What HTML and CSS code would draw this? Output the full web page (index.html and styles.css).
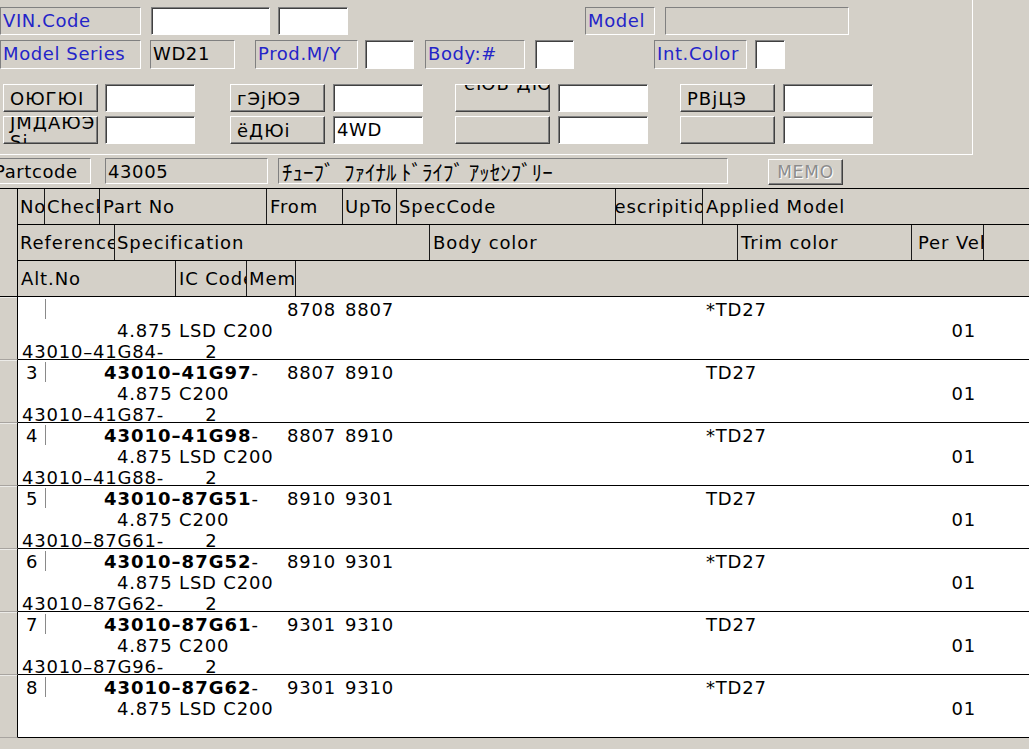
FILE: index.html
```html
<!DOCTYPE html>
<html>
<head>
<meta charset="utf-8">
<link rel="stylesheet" href="styles.css">
</head>
<body>
<div class="screen">
  <div class="panel">
    <div class="frow r1">
      <div class="lbl w141">VIN.Code</div>
      <div class="inp m10 w119"></div>
      <div class="inp m8 w70"></div>
      <div class="lbl m237 w70">Model</div>
      <div class="fld m10 w184"></div>
    </div>
    <div class="frow r2">
      <div class="lbl w141">Model Series</div>
      <div class="fld m9 w85">WD21</div>
      <div class="lbl m20 w103">Prod.M/Y</div>
      <div class="inp m7 w49"></div>
      <div class="lbl m11 w100">Body:#</div>
      <div class="inp m10 w39"></div>
      <div class="lbl m80 w93">Int.Color</div>
      <div class="inp m8 w30"></div>
    </div>
    <div class="frow r3">
      <div class="btn m3"><span>ОЮГЮI</span></div>
      <div class="inp m7 w90"></div>
      <div class="btn m35"><span>гЭjЮЭ</span></div>
      <div class="inp m8 w90"></div>
      <div class="btn btn-top m32"><span>еЮЬ ДЮ</span></div>
      <div class="inp m8 w90"></div>
      <div class="btn m32"><span>РВjЦЭ</span></div>
      <div class="inp m8 w90"></div>
    </div>
    <div class="frow r4">
      <div class="btn btn-two m3"><span>JМДАЮЭ</span><span>Si</span></div>
      <div class="inp m7 w90"></div>
      <div class="btn m35"><span>ёДЮi</span></div>
      <div class="inp m8 w90">4WD</div>
      <div class="btn m32"></div>
      <div class="inp m8 w90"></div>
      <div class="btn m32"></div>
      <div class="inp m8 w90"></div>
    </div>
  </div>

  <div class="partrow">
    <div class="lbl plbl">Partcode</div>
    <div class="fld m14 w163">43005</div>
    <div class="fld jp m10 w450">ﾁｭｰﾌﾞ  ﾌｧｲﾅﾙ ﾄﾞﾗｲﾌﾞ ｱｯｾﾝﾌﾞﾘｰ</div>
    <div class="memo m40">MEMO</div>
  </div>

  <div class="grid">
    <div class="ghead">
      <div class="rh rh-head"></div>
      <div class="hrows">
        <div class="hrow">
          <div class="hc h-no">No</div>
          <div class="hc h-chk">Check</div>
          <div class="hc h-pn">Part No</div>
          <div class="hc h-from">From</div>
          <div class="hc h-upto">UpTo</div>
          <div class="hc h-spec">SpecCode</div>
          <div class="hc h-desc"><span>Descripition</span></div>
          <div class="hc h-app last">Applied Model</div>
        </div>
        <div class="hrow">
          <div class="hc h-ref">Reference</div>
          <div class="hc h-spn">Specification</div>
          <div class="hc h-body">Body color</div>
          <div class="hc h-trim">Trim color</div>
          <div class="hc h-per">Per Vehicle</div>
          <div class="hc last"></div>
        </div>
        <div class="hrow">
          <div class="hc h-alt">Alt.No</div>
          <div class="hc h-ic">IC Code</div>
          <div class="hc h-memo">Memo</div>
          <div class="hc last"></div>
        </div>
      </div>
    </div>

    <div class="drow">
      <div class="rh"></div>
      <div class="dlines">
        <div class="dl"><span class="c-no"></span><span class="c-chk"></span><span class="c-pn"></span><span class="c-from">8708</span><span class="c-upto">8807</span><span class="c-spec"></span><span class="c-desc"></span><span class="c-app">*TD27</span></div>
        <div class="dl"><span class="c-ref"></span><span class="c-spn">4.875 LSD C200</span><span class="c-body"></span><span class="c-trim"></span><span class="c-per">01</span></div>
        <div class="dl"><span class="c-alt">43010–41G84-</span><span class="c-ic">2</span><span class="c-memo"></span></div>
      </div>
    </div>

    <div class="drow">
      <div class="rh"></div>
      <div class="dlines">
        <div class="dl"><span class="c-no">3</span><span class="c-chk"></span><span class="c-pn"><b>43010–41G97</b>-</span><span class="c-from">8807</span><span class="c-upto">8910</span><span class="c-spec"></span><span class="c-desc"></span><span class="c-app">TD27</span></div>
        <div class="dl"><span class="c-ref"></span><span class="c-spn">4.875 C200</span><span class="c-body"></span><span class="c-trim"></span><span class="c-per">01</span></div>
        <div class="dl"><span class="c-alt">43010–41G87-</span><span class="c-ic">2</span><span class="c-memo"></span></div>
      </div>
    </div>

    <div class="drow">
      <div class="rh"></div>
      <div class="dlines">
        <div class="dl"><span class="c-no">4</span><span class="c-chk"></span><span class="c-pn"><b>43010–41G98</b>-</span><span class="c-from">8807</span><span class="c-upto">8910</span><span class="c-spec"></span><span class="c-desc"></span><span class="c-app">*TD27</span></div>
        <div class="dl"><span class="c-ref"></span><span class="c-spn">4.875 LSD C200</span><span class="c-body"></span><span class="c-trim"></span><span class="c-per">01</span></div>
        <div class="dl"><span class="c-alt">43010–41G88-</span><span class="c-ic">2</span><span class="c-memo"></span></div>
      </div>
    </div>

    <div class="drow">
      <div class="rh"></div>
      <div class="dlines">
        <div class="dl"><span class="c-no">5</span><span class="c-chk"></span><span class="c-pn"><b>43010–87G51</b>-</span><span class="c-from">8910</span><span class="c-upto">9301</span><span class="c-spec"></span><span class="c-desc"></span><span class="c-app">TD27</span></div>
        <div class="dl"><span class="c-ref"></span><span class="c-spn">4.875 C200</span><span class="c-body"></span><span class="c-trim"></span><span class="c-per">01</span></div>
        <div class="dl"><span class="c-alt">43010–87G61-</span><span class="c-ic">2</span><span class="c-memo"></span></div>
      </div>
    </div>

    <div class="drow">
      <div class="rh"></div>
      <div class="dlines">
        <div class="dl"><span class="c-no">6</span><span class="c-chk"></span><span class="c-pn"><b>43010–87G52</b>-</span><span class="c-from">8910</span><span class="c-upto">9301</span><span class="c-spec"></span><span class="c-desc"></span><span class="c-app">*TD27</span></div>
        <div class="dl"><span class="c-ref"></span><span class="c-spn">4.875 LSD C200</span><span class="c-body"></span><span class="c-trim"></span><span class="c-per">01</span></div>
        <div class="dl"><span class="c-alt">43010–87G62-</span><span class="c-ic">2</span><span class="c-memo"></span></div>
      </div>
    </div>

    <div class="drow">
      <div class="rh"></div>
      <div class="dlines">
        <div class="dl"><span class="c-no">7</span><span class="c-chk"></span><span class="c-pn"><b>43010–87G61</b>-</span><span class="c-from">9301</span><span class="c-upto">9310</span><span class="c-spec"></span><span class="c-desc"></span><span class="c-app">TD27</span></div>
        <div class="dl"><span class="c-ref"></span><span class="c-spn">4.875 C200</span><span class="c-body"></span><span class="c-trim"></span><span class="c-per">01</span></div>
        <div class="dl"><span class="c-alt">43010–87G96-</span><span class="c-ic">2</span><span class="c-memo"></span></div>
      </div>
    </div>

    <div class="drow">
      <div class="rh"></div>
      <div class="dlines">
        <div class="dl"><span class="c-no">8</span><span class="c-chk"></span><span class="c-pn"><b>43010–87G62</b>-</span><span class="c-from">9301</span><span class="c-upto">9310</span><span class="c-spec"></span><span class="c-desc"></span><span class="c-app">*TD27</span></div>
        <div class="dl"><span class="c-ref"></span><span class="c-spn">4.875 LSD C200</span><span class="c-body"></span><span class="c-trim"></span><span class="c-per">01</span></div>
        <div class="dl"><span class="c-alt"></span><span class="c-ic"></span><span class="c-memo"></span></div>
      </div>
    </div>
  </div>
</div>
</body>
</html>
```

FILE: styles.css
```css
* { box-sizing: border-box; }

html, body {
  margin: 0;
  padding: 0;
  background: #d4d0c8;
}

body {
  width: 1029px;
  height: 749px;
  overflow: hidden;
  font-family: "DejaVu Sans", "Noto Sans CJK JP", sans-serif;
  font-size: 18px;
  color: #000;
}

.screen {
  width: 1029px;
  height: 749px;
  overflow: hidden;
}

/* ---------- top panel ---------- */
.panel {
  width: 973px;
  height: 155px;
  border-right: 1px solid #ffffff;
  border-bottom: 1px solid #ffffff;
  padding-top: 7px;
}

.frow {
  display: flex;
  height: 28px;
}
.r2 { margin-top: 5px; height: 29px; }
.r3 { margin-top: 15px; }
.r4 { margin-top: 4px; }

.lbl, .fld, .inp {
  height: 100%;
  border-top: 1px solid #808080;
  border-left: 1px solid #808080;
  border-bottom: 1px solid #ffffff;
  border-right: 1px solid #ffffff;
  padding-left: 2px;
  line-height: 26px;
  white-space: nowrap;
  overflow: hidden;
  flex: none;
}

.lbl {
  color: #2424c8;
  letter-spacing: 0.6px;
}

.fld {
  color: #000;
  letter-spacing: 0.6px;
}

.inp {
  background: #ffffff;
  box-shadow: inset 1px 1px 0 #404040;
  padding-left: 3px;
  letter-spacing: 0.6px;
}

.btn {
  flex: none;
  width: 95px;
  height: 100%;
  background: #d4d0c8;
  border-top: 1px solid #ffffff;
  border-left: 1px solid #ffffff;
  border-right: 1px solid #404040;
  border-bottom: 1px solid #404040;
  box-shadow: inset -1px -1px 0 #808080;
  display: flex;
  flex-direction: column;
  justify-content: flex-start;
  overflow: hidden;
  padding-left: 6px;
  font-size: 18px;
  line-height: 18px;
  letter-spacing: 1px;
  white-space: nowrap;
}
.btn span { display: block; margin-top: 5px; }
.btn-two span:first-child { margin-top: -3px; }
.btn-two span { margin-top: 1px; }
.btn-top span { margin-top: -10px; padding-left: 2px; }

/* widths */
.w30 { width: 30px; }
.w39 { width: 39px; }
.w49 { width: 49px; }
.w70 { width: 70px; }
.w85 { width: 85px; }
.w90 { width: 90px; }
.w93 { width: 93px; }
.w100 { width: 100px; }
.w103 { width: 103px; }
.w119 { width: 119px; }
.w141 { width: 141px; }
.w163 { width: 163px; }
.w184 { width: 184px; }
.w450 { width: 450px; }

/* left margins */
.m3 { margin-left: 3px; }
.m7 { margin-left: 7px; }
.m8 { margin-left: 8px; }
.m9 { margin-left: 9px; }
.m10 { margin-left: 10px; }
.m11 { margin-left: 11px; }
.m14 { margin-left: 14px; }
.m20 { margin-left: 20px; }
.m32 { margin-left: 32px; }
.m35 { margin-left: 35px; }
.m40 { margin-left: 40px; }
.m80 { margin-left: 80px; }
.m237 { margin-left: 237px; }

/* ---------- part code row ---------- */
.partrow {
  display: flex;
  height: 26px;
  margin-top: 3px;
}
.partrow .lbl, .partrow .fld {
  line-height: 22px;
  padding-top: 2px;
}
.plbl {
  width: 100px;
  margin-left: -9px;
  color: #000;
  letter-spacing: 0.6px;
}
.partrow .fld.jp {
  font-family: "Noto Sans CJK JP", sans-serif;
  font-size: 21px;
  line-height: 22px;
  letter-spacing: 0;
  padding-left: 3px;
  padding-top: 1px;
  white-space: pre;
}
.memo {
  flex: none;
  width: 75px;
  height: 26px;
  margin-top: 1px;
  border-top: 1px solid #ffffff;
  border-left: 1px solid #ffffff;
  border-right: 1px solid #404040;
  border-bottom: 1px solid #404040;
  box-shadow: inset -1px -1px 0 #808080;
  color: #8c8c8c;
  text-shadow: 1px 1px 0 #ffffff;
  text-align: center;
  line-height: 24px;
  font-size: 17px;
  letter-spacing: 0.8px;
}

/* ---------- grid ---------- */
.grid {
  margin-top: 4px;
  border-top: 1px solid #000;
}

.ghead {
  display: flex;
}

.rh {
  flex: none;
  width: 18px;
  background: #d4d0c8;
  border-right: 1px solid #000;
}
.rh-head {
  height: 108px;
  border-bottom: 1px solid #000;
}

.hrows {
  flex: 1;
  display: flex;
  flex-direction: column;
}
.hrow {
  display: flex;
  height: 36px;
  border-bottom: 1px solid #000;
}
.hc {
  flex: none;
  height: 35px;
  line-height: 35px;
  padding-left: 2px;
  border-right: 1px solid #1a1a1a;
  white-space: nowrap;
  overflow: hidden;
  letter-spacing: 0.9px;
}
.hc.last { flex: 1; border-right: none; }

.h-no { width: 27px; }
.h-chk { width: 55px; }
.h-pn { width: 167px; padding-left: 3px; }
.h-from { width: 76px; padding-left: 3px; }
.h-upto { width: 54px; }
.h-spec { width: 219px; }
.h-desc {
  width: 87px;
  display: flex;
  justify-content: center;
  padding-left: 0;
}
.h-desc span { flex: none; }
.h-app { padding-left: 3px; }
.h-ref { width: 97px; }
.h-spn { width: 315px; }
.h-body { width: 308px; padding-left: 3px; }
.h-trim { width: 174px; padding-left: 3px; }
.h-per { width: 72px; padding-left: 6px; }
.h-alt { width: 158px; padding-left: 3px; }
.h-ic { width: 71px; padding-left: 3px; }
.h-memo { width: 49px; }

.drow {
  display: flex;
  height: 63px;
}
.drow .rh {
  height: 63px;
  border-bottom: 1px solid #a8a4a0;
  box-shadow: inset 0 1px 0 #ecebe8;
}
.dlines {
  flex: 1;
  height: 63px;
  background: #ffffff;
  border-bottom: 1px solid #000;
  padding-top: 2px;
  overflow: hidden;
}
.dl {
  display: flex;
  height: 21px;
  line-height: 21px;
  white-space: nowrap;
  letter-spacing: 0.8px;
}
.dl span { flex: none; display: block; }
.dl b { letter-spacing: 1px; }

.c-no { width: 27px; padding-left: 8px; }
.c-chk { width: 55px; height: 20px; border-left: 1px solid #8a8a8a; }
.c-pn { width: 167px; padding-left: 4px; }
.c-from { width: 76px; text-align: right; padding-right: 7px; }
.c-upto { width: 54px; padding-left: 2px; }
.c-spec { width: 219px; }
.c-desc { width: 87px; }
.c-app { padding-left: 3px; }

.c-ref { width: 97px; }
.c-spn { width: 315px; padding-left: 2px; }
.c-body { width: 308px; }
.c-trim { width: 174px; }
.c-per { width: 72px; text-align: right; padding-right: 8px; }

.c-alt { width: 158px; padding-left: 4px; }
.c-ic { width: 71px; text-align: center; }
.c-memo { width: 49px; }
```
